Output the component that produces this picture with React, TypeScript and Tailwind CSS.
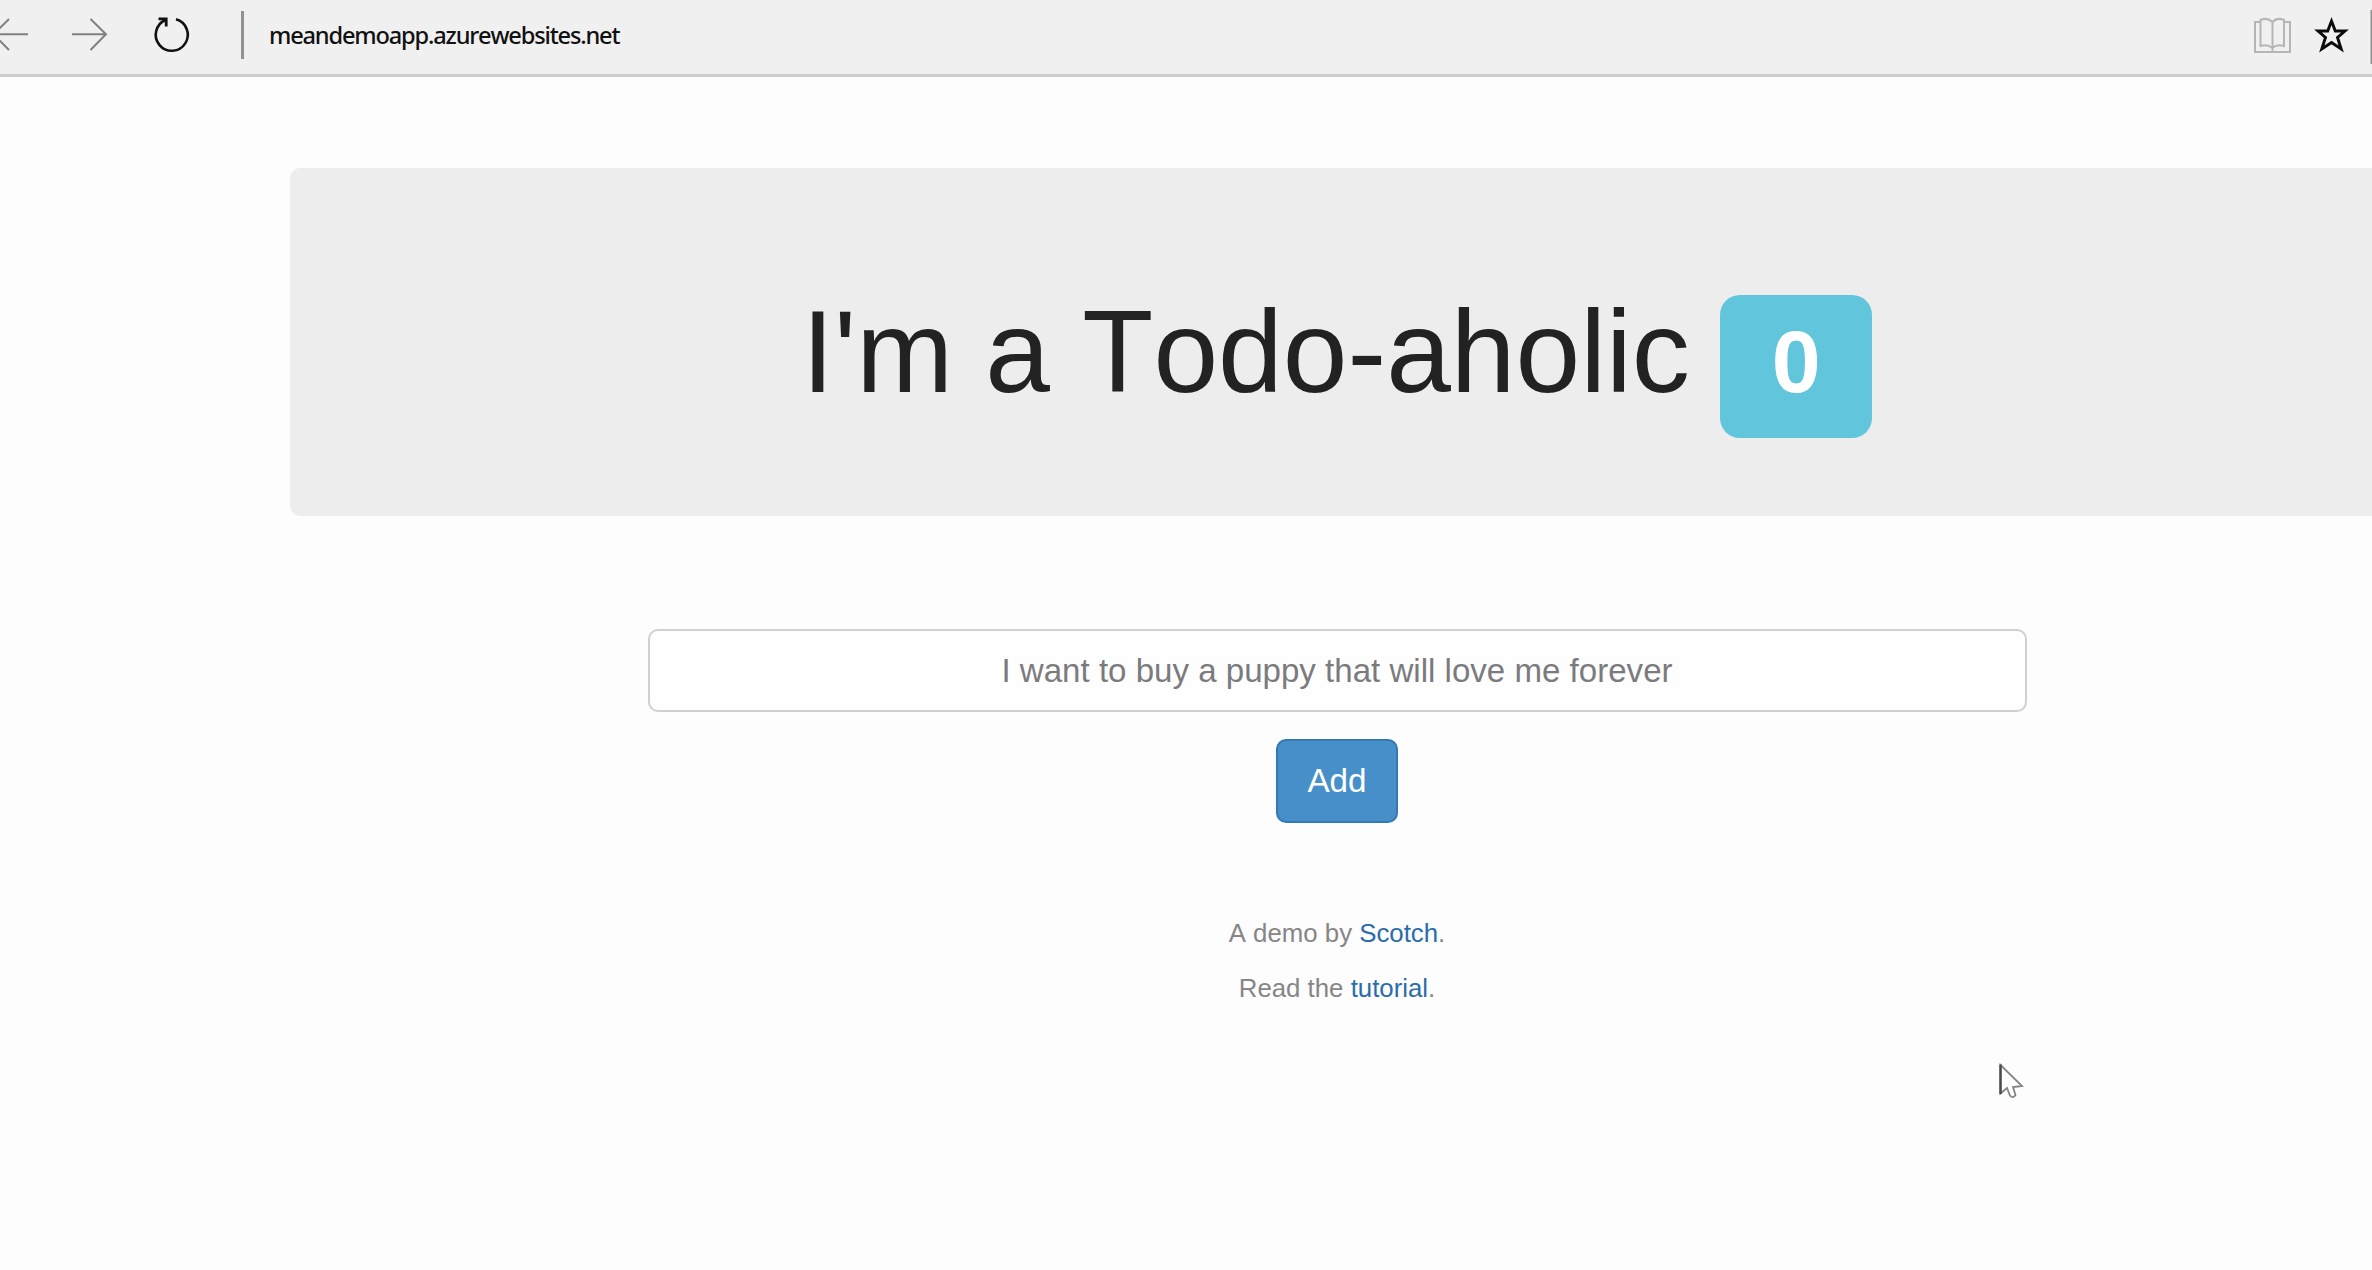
function Toolbar() {
  return (
    <header className="flex h-[77px] items-start border-b-[3px] border-[#cdcdcd] bg-[#f0f0f0]">
      <svg className="h-[74px] w-[210px] shrink-0" viewBox="0 0 210 74" fill="none">
        <g stroke="#808080" strokeWidth="2">
          <path d="M-7 34.300H28M9 19L-6.500 34.300L9 50" />
          <path d="M72 34.300H106.500M90.500 19L106 34.300L90.500 50" />
        </g>
        <path d="M176 19.300A16 16 0 1 1 165.500 20" stroke="#111" strokeWidth="2.600" />
        <path d="M158.500 18.800H166.200V26.500" stroke="#111" strokeWidth="2.800" />
      </svg>
      <div className="ml-[31px] mt-[11px] h-[48px] w-[3px] bg-[#929292]" />
      <div className="ml-[25px] mt-[17px] whitespace-nowrap font-['Noto_Sans',sans-serif] text-[23.6px] font-medium leading-[36px] tracking-[-1.170px] text-[#111]">
        meandemoapp.azurewebsites.net
      </div>
      <svg className="ml-auto h-[74px] w-[132px] shrink-0" viewBox="2240 0 132 74" fill="none">
        <g stroke="#b5b5b5" strokeWidth="2">
          <path d="M2260 22H2255V52H2290V22H2285" />
          <path d="M2272.500 51V22Q2267 17 2260.500 20V46Q2267 44 2272.500 48Q2277 44 2284 46V20Q2277 17 2272.500 22" />
        </g>
        <path
          d="M2331.500 21L2335.300 31H2345L2337.500 37.500L2341.200 49L2331.500 42.500L2321.800 49L2325.500 37.500L2318 31H2327.700Z"
          stroke="#0b0b0b"
          strokeWidth="2.900"
        />
        <path d="M2371.500 10V64" stroke="#8e8e8e" strokeWidth="2" />
      </svg>
    </header>
  );
}

function Pointer() {
  return (
    <svg className="absolute left-[1996px] top-[1060px] h-[42px] w-[32px]" viewBox="0 0 32 42" fill="none">
      <path d="M4.500 5V33.500L11 28L14 35.500Q17 39 19.500 35L17 27L26 26Z" fill="#fff" stroke="#858585" strokeWidth="1.800" />
      <path d="M4.500 4.500V34" stroke="#4a4a4a" strokeWidth="2.400" />
    </svg>
  );
}

export default function App() {
  return (
    <div className="relative h-[1270px] w-[2372px] overflow-hidden bg-[#fdfdfd] font-['Liberation_Sans',Arial,sans-serif] [font-kerning:none]">
      <Toolbar />
      <main className="ml-[290px] mt-[91px] w-[2094px]">
        <section className="flex h-[348px] items-start justify-center rounded-[10px] bg-[#ededed]">
          <h1 className="mt-[118px] whitespace-pre text-[116.3px] leading-[133px] text-[#222]">I'm a Todo-aholic </h1>
          <span className="-ml-[2px] mt-[127px] flex h-[143px] w-[152px] justify-center rounded-[20px] bg-[#61c6db] text-[88px] font-bold leading-[133px] text-white">
            0
          </span>
        </section>
        <section className="mt-[113px] flex flex-col items-center">
          <input
            aria-label="New todo"
            placeholder="I want to buy a puppy that will love me forever"
            className="h-[83px] w-[1379px] rounded-[10px] border-[2.500px] border-[#d0d0d0] bg-[#fefefe] px-7 text-center text-[33.1px] outline-none placeholder:text-[#7b7b7e] placeholder:opacity-100"
          />
          <button className="mt-[27px] h-[84px] w-[122px] rounded-[10px] border-2 border-[#3379b3] bg-[#478fc9] text-[33.2px] leading-none text-white">
            Add
          </button>
        </section>
        <footer className="mt-[92px] text-center text-[25.8px] leading-[37px] text-[#868686]">
          <p>
            A demo by <a className="text-[#2b6cab]">Scotch</a>.
          </p>
          <p className="mt-[18px]">
            Read the <a className="text-[#2b6cab]">tutorial</a>.
          </p>
        </footer>
      </main>
      <Pointer />
    </div>
  );
}
